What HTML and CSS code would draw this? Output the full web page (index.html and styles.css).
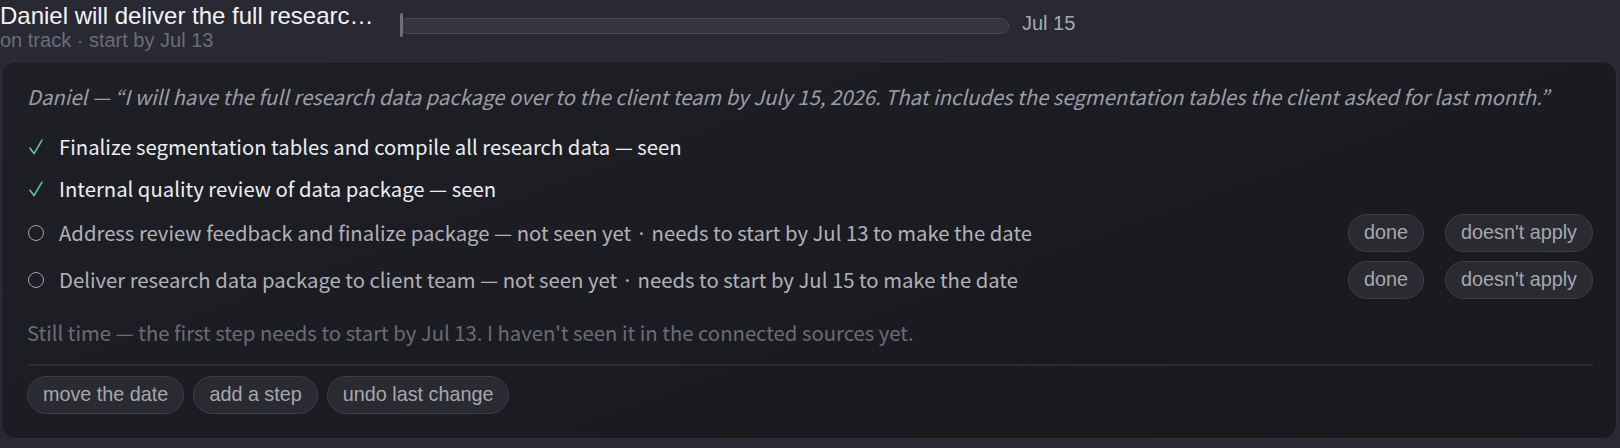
FILE: index.html
```html
<!DOCTYPE html>
<html lang="en">
<head>
<meta charset="utf-8">
<title>Commitment</title>
<link rel="stylesheet" href="styles.css">
</head>
<body>
<div class="page">
  <header class="head">
    <div class="head-text">
      <div class="title">Daniel will deliver the full research data package to the client team</div>
      <div class="sub">on track · start by Jul 13</div>
    </div>
    <div class="timeline">
      <div class="track"><span class="tick"></span></div>
      <span class="due">Jul 15</span>
    </div>
  </header>

  <section class="card">
    <p class="quote">Daniel — “I will have the full research data package over to the client team by July 15, 2026. That includes the segmentation tables the client asked for last month.”</p>

    <ul class="steps">
      <li class="step done">
        <svg class="check" width="14" height="16" viewBox="0 0 14 16"><path d="M1 9.2 L5 14.6 L13 1.2" fill="none" stroke="#5ccb8b" stroke-width="1.6" stroke-linecap="round" stroke-linejoin="round"/></svg>
        <span class="label">Finalize segmentation tables and compile all research data — seen</span>
      </li>
      <li class="step done">
        <svg class="check" width="14" height="16" viewBox="0 0 14 16"><path d="M1 9.2 L5 14.6 L13 1.2" fill="none" stroke="#5ccb8b" stroke-width="1.6" stroke-linecap="round" stroke-linejoin="round"/></svg>
        <span class="label">Internal quality review of data package — seen</span>
      </li>
      <li class="step pending">
        <span class="ring"></span>
        <span class="label">Address review feedback and finalize package — not seen yet · needs to start by Jul 13 to make the date</span>
        <span class="actions"><button class="pill">done</button><button class="pill">doesn't apply</button></span>
      </li>
      <li class="step pending">
        <span class="ring"></span>
        <span class="label">Deliver research data package to client team — not seen yet · needs to start by Jul 15 to make the date</span>
        <span class="actions"><button class="pill">done</button><button class="pill">doesn't apply</button></span>
      </li>
    </ul>

    <p class="note">Still time — the first step needs to start by Jul 13. I haven't seen it in the connected sources yet.</p>

    <div class="footer">
      <button class="pill">move the date</button>
      <button class="pill">add a step</button>
      <button class="pill">undo last change</button>
    </div>
  </section>
</div>
</body>
</html>
```
FILE: styles.css
```css
* { box-sizing: border-box; }

html, body {
  margin: 0;
  padding: 0;
  background: #282932;
  height: 100%;
}

.page {
  font-family: "Liberation Sans", Arial, sans-serif;
  color: #f1f2f5;
}

.head {
  display: flex;
  align-items: flex-start;
  padding-top: 3px;
}

.head-text {
  width: 376px;
  margin-right: 24px;
  flex: none;
}

.title {
  font-size: 24px;
  line-height: 26px;
  color: #f3f4f7;
  white-space: nowrap;
  overflow: hidden;
  text-overflow: ellipsis;
}

.sub {
  font-size: 20px;
  line-height: 23px;
  color: #6a6d77;
  white-space: nowrap;
}

.timeline {
  display: flex;
  align-items: center;
  gap: 13px;
  margin-top: 11px;
  height: 23px;
}

.track {
  position: relative;
  width: 609px;
  height: 16px;
  background: #34353e;
  border: 1.5px solid #464751;
  border-radius: 8px;
}

.tick {
  position: absolute;
  left: -1.5px;
  top: -5.5px;
  width: 3px;
  height: 24px;
  border-radius: 2px;
  background: #6d707a;
}

.due {
  font-size: 20px;
  color: #a7a9b0;
  margin-top: -5px;
}

.card {
  margin: 9px 3px 0 1px;
  border: 1px solid #2f3038;
  border-radius: 14px;
  background: linear-gradient(160deg, #1f2026 0%, #1b1c21 55%, #19191e 100%);
  padding: 18px 23px 24px 25px;
  font-family: "Noto Sans CJK KR", sans-serif;
  font-variant-east-asian: proportional-width;
  font-size: 20.3px;
}

.quote {
  margin: 0;
  line-height: 32px;
  font-style: italic;
  color: #9b9da5;
  white-space: nowrap;
}

.steps {
  list-style: none;
  margin: 18px 0 0;
  padding: 0;
  display: flex;
  flex-direction: column;
  gap: 8px;
}

.step {
  display: flex;
  align-items: center;
  min-height: 34px;
  line-height: 32px;
}

.pending + .pending { margin-top: 1px; }

.check {
  flex: none;
  margin: 0 16px 0 2px;
}

.ring {
  flex: none;
  width: 16px;
  height: 16px;
  border: 1.6px solid #a3a5ac;
  border-radius: 50%;
  margin: 0 15px 0 1px;
}

.done .label { color: #eceef2; }
.pending .label { color: #b0b2b8; }

.label {
  flex: 1;
  white-space: nowrap;
  padding-bottom: 2px;
}

.actions {
  display: flex;
  gap: 21px;
  flex: none;
}

.pill {
  font-family: "Liberation Sans", Arial, sans-serif;
  font-size: 19.8px;
  height: 38px;
  padding: 0 15px;
  border: 1px solid #3d3e46;
  border-radius: 19px;
  background: #2a2b31;
  color: #a5a7ae;
  line-height: 1;
  cursor: pointer;
}

.note {
  margin: 17px 0 0;
  line-height: 32px;
  color: #6a6c75;
}

.footer {
  display: flex;
  gap: 9px;
  margin-top: 16px;
  padding-top: 10px;
  border-top: 2px solid #2c2d34;
}
```
